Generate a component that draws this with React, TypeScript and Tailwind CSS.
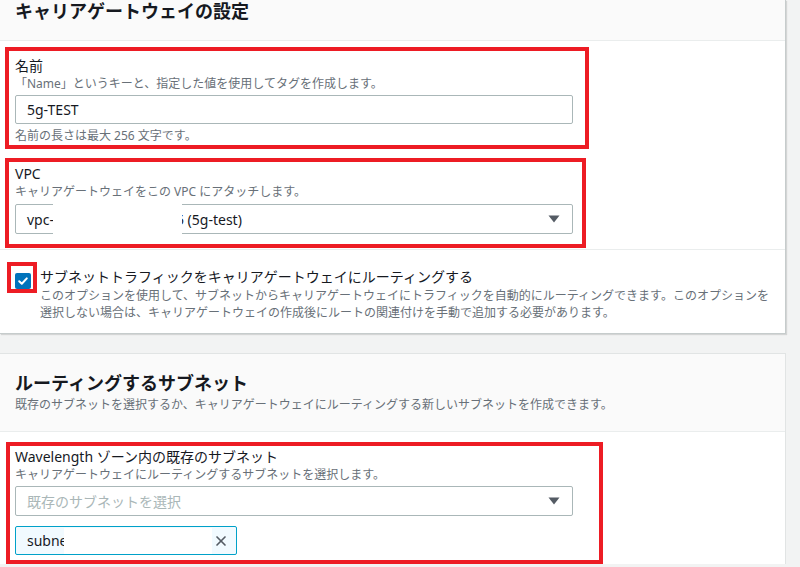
import { X } from "lucide-react";

const font = { fontFamily: '"Noto Sans", "Noto Sans CJK JP", sans-serif' };

function Caret() {
  return (
    <svg width="12" height="8" viewBox="0 0 12 8" className="shrink-0">
      <path d="M0.5 0.5h11L6 7.5z" fill="#545b64" />
    </svg>
  );
}

function Checkbox() {
  return (
    <div className="w-[16px] h-[16px] rounded-[2px] bg-[#0073bb] flex items-center justify-center">
      <svg width="12" height="12" viewBox="0 0 12 12">
        <path d="M2.2 6.2l2.6 2.6 5-5.4" stroke="#fff" strokeWidth="2" fill="none" strokeLinecap="round" strokeLinejoin="round" />
      </svg>
    </div>
  );
}

export default function App() {
  return (
    <div className="w-[800px] h-[567px] overflow-hidden bg-[#f2f3f3] text-[#16191f]" style={font}>
      {/* carrier gateway settings */}
      <div className="w-[786px] bg-white border-b border-r border-[#c6cccc] shadow-[1px_1px_1px_rgba(0,0,0,0.12)]">
        <div className="h-[41px] bg-[#fafafa] border-b border-[#eaeded] px-[15px]">
          <h2 className="text-[18px] font-bold leading-[22px]">キャリアゲートウェイの設定</h2>
        </div>

        <div className="pl-[5px] pt-[6px]">
          {/* name */}
          <div className="w-[584px] border-4 border-[#ed1c24] pl-[6px] pt-[5px] pb-[1px]">
            <div className="text-[14px] leading-[20px]">名前</div>
            <div className="text-[12px] leading-[16px] text-[#687078]">「Name」というキーと、指定した値を使用してタグを作成します。</div>
            <div className="mt-[3px] w-[558px] h-[29px] border border-[#aab7b8] rounded-[2px] flex items-center px-[11px] text-[14px]">5g-TEST</div>
            <div className="mt-[4px] text-[12px] leading-[16px] text-[#687078]">名前の長さは最大 256 文字です。</div>
          </div>

          {/* vpc */}
          <div className="mt-[9px] w-[581px] border-4 border-[#ed1c24] pl-[6px] pt-[2px] pb-[10px]">
            <div className="text-[14px] leading-[20px]">VPC</div>
            <div className="text-[12px] leading-[16px] text-[#687078]">キャリアゲートウェイをこの VPC にアタッチします。</div>
            <div className="relative mt-[4px] w-[558px] h-[30px] border border-[#aab7b8] rounded-[2px] flex items-center justify-between pl-[11px] pr-[12px] text-[14px]">
              <span>vpc-<span className="inline-block w-[122px]" />5 (5g-test)</span>
              <Caret />
              <div className="absolute left-[37px] top-[-2px] w-[129px] h-[32px] bg-white" />
            </div>
          </div>
        </div>

        {/* route option */}
        <div className="mt-[1px] border-t border-[#eaeded] flex pl-[7px] pt-[12px] pb-[12px]">
          <div className="w-[30px] h-[31px] shrink-0 border-4 border-[#ed1c24] pl-[4px] pt-[7px]">
            <Checkbox />
          </div>
          <div className="pl-[3px] pt-[5px]">
            <div className="text-[14px] leading-[20px]">サブネットトラフィックをキャリアゲートウェイにルーティングする</div>
            <div className="text-[12px] leading-[17px] text-[#687078]">
              <div>このオプションを使用して、サブネットからキャリアゲートウェイにトラフィックを自動的にルーティングできます。このオプションを</div>
              <div>選択しない場合は、キャリアゲートウェイの作成後にルートの関連付けを手動で追加する必要があります。</div>
            </div>
          </div>
        </div>
      </div>

      {/* subnets to route */}
      <div className="mt-[19px] w-[786px] bg-white border-t border-r border-[#e1e4e4]">
        <div className="h-[78px] bg-[#fafafa] border-b border-[#eaeded] px-[15px] pt-[17px]">
          <h2 className="text-[18px] font-bold leading-[24px]">ルーティングするサブネット</h2>
          <div className="mt-[2px] text-[12px] leading-[16px] text-[#687078]">既存のサブネットを選択するか、キャリアゲートウェイにルーティングする新しいサブネットを作成できます。</div>
        </div>

        <div className="pl-[6px] pt-[10px]">
          <div className="w-[597px] border-4 border-[#ed1c24] pl-[5px] pt-[1px] pb-[5px]">
            <div className="text-[14px] leading-[20px]">Wavelength ゾーン内の既存のサブネット</div>
            <div className="text-[12px] leading-[16px] text-[#687078]">キャリアゲートウェイにルーティングするサブネットを選択します。</div>
            <div className="mt-[3px] w-[558px] h-[30px] border border-[#aab7b8] rounded-[2px] flex items-center justify-between pl-[11px] pr-[12px] text-[14px] text-[#aab7b8]">
              <span>既存のサブネットを選択</span>
              <Caret />
            </div>
            <div className="relative mt-[10px] w-[222px] h-[29px] border border-[#00a1c9] rounded-[2px] bg-[#f1faff] flex items-center justify-between pl-[11px] pr-[7px] text-[14px]">
              <span>subne</span>
              <X size={16} strokeWidth={2.5} color="#545b64" />
              <div className="absolute left-[48px] top-[1px] w-[148px] h-[26px] bg-white" />
            </div>
          </div>
        </div>
      </div>
    </div>
  );
}
